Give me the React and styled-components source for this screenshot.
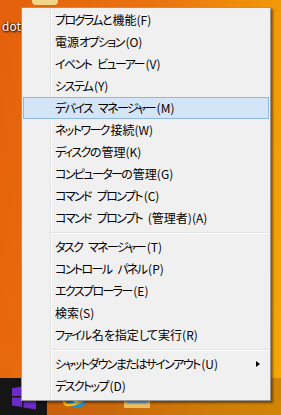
import React from "react";
import styled, { createGlobalStyle } from "styled-components";

const GlobalStyle = createGlobalStyle`
  html, body { margin: 0; padding: 0; width: 281px; height: 415px; overflow: hidden; }
  body { font-family: "Noto Sans CJK JP", "Noto Sans", sans-serif; }
`;

const Screen = styled.div`
  position: relative;
  width: 281px;
  height: 415px;
  display: flex;
  flex-direction: column;
  background: linear-gradient(100deg, #e4600c 0%, #ea7410 45%, #f29a08 80%, #f5a806 100%);
  overflow: hidden;
`;

const Desktop = styled.div`
  position: relative;
  flex: 1;
`;

const IconLabel = styled.div`
  position: absolute;
  left: 2px;
  top: 17px;
  font-family: "Noto Sans CJK JP", sans-serif;
  font-size: 12px;
  color: #fff;
  text-shadow: 0 0 2px #000, 1px 1px 2px #000;
`;

const IconStub = styled.div`
  position: absolute;
  left: 32px;
  top: 0;
  width: 26px;
  height: 5px;
  border-radius: 0 0 4px 4px;
  background: #f3d58a;
`;

const Taskbar = styled.div`
  height: 37px;
  display: flex;
  align-items: center;
  background: rgba(140, 70, 10, 0.35);
`;

const StartButton = styled.div`
  width: 47px;
  height: 100%;
  background: #151515;
  display: flex;
  align-items: center;
  justify-content: center;
`;

const TaskIcon = styled.div`
  width: 60px;
  height: 100%;
  display: flex;
  align-items: center;
  justify-content: center;
`;

const Menu = styled.div`
  position: absolute;
  left: 21px;
  top: 7px;
  width: 246px;
  padding: 1px 1px 3px;
  border: 1px solid #979797;
  background-color: #f0f0f0;
  background-image: linear-gradient(
    to right,
    transparent 28px,
    #e2e3e3 28px,
    #e2e3e3 29px,
    #ffffff 29px,
    #ffffff 30px,
    transparent 30px
  );
  box-shadow: 2px 2px 2px rgba(0, 0, 0, 0.45);
  font-family: "Meiryo UI", "Noto Sans CJK JP", sans-serif;
  font-size: 12px;
  font-feature-settings: "palt";
  color: #000;
  display: flex;
  flex-direction: column;
`;

const Item = styled.div`
  position: relative;
  height: 22px;
  box-sizing: border-box;
  display: flex;
  align-items: center;
  padding-left: 31px;
  line-height: 1;
  border: 1px solid ${(p) => (p.$hot ? "#90b8e4" : "transparent")};
  background: ${(p) => (p.$hot ? "#d4e5f7" : "transparent")};
`;

const Text = styled.span`
  white-space: pre;
  word-spacing: 1.5px;
`;

const Kana = styled.span`
  letter-spacing: -1.6px;
  margin-right: 1.6px;
`;

const Separator = styled.div`
  height: 7px;
  margin-left: 28px;
  display: flex;
  flex-direction: column;
  justify-content: center;
  &::before {
    content: "";
    height: 1px;
    background: #e2e3e3;
  }
  &::after {
    content: "";
    height: 1px;
    background: #fff;
  }
`;

const Arrow = styled.span`
  position: absolute;
  right: 8px;
  top: 7px;
  width: 0;
  height: 0;
  border-top: 3.5px solid transparent;
  border-bottom: 3.5px solid transparent;
  border-left: 4px solid #000;
`;

const groups = [
  [
    "プログラムと機能(F)",
    "電源オプション(O)",
    "イベント ビューアー(V)",
    "システム(Y)",
    "デバイス マネージャー(M)",
    "ネットワーク接続(W)",
    "ディスクの管理(K)",
    "コンピューターの管理(G)",
    "コマンド プロンプト(C)",
    "コマンド プロンプト (管理者)(A)",
  ],
  [
    "タスク マネージャー(T)",
    "コントロール パネル(P)",
    "エクスプローラー(E)",
    "検索(S)",
    "ファイル名を指定して実行(R)",
  ],
  ["シャットダウンまたはサインアウト(U)", "デスクトップ(D)"],
];

function Label({ text }) {
  const parts = text.split(/([\u3040-\u30ff]+)/).filter(Boolean);
  return (
    <Text>
      {parts.map((p, i) =>
        /^[\u3040-\u30ff]+$/.test(p) ? <Kana key={i}>{p}</Kana> : <React.Fragment key={i}>{p}</React.Fragment>
      )}
    </Text>
  );
}

const WinLogo = () => (
  <svg width="26" height="26" viewBox="0 0 26 26">
    <polygon points="1,4 11,2.6 11,12 1,12" fill="#6a2bc9" />
    <polygon points="12.5,2.4 25,0.6 25,12 12.5,12" fill="#6a2bc9" />
    <polygon points="1,13.5 11,13.5 11,23 1,21.6" fill="#6a2bc9" />
    <polygon points="12.5,13.5 25,13.5 25,25.4 12.5,23.6" fill="#6a2bc9" />
  </svg>
);

const IEIcon = () => (
  <svg width="30" height="30" viewBox="0 0 30 30">
    <circle cx="15" cy="16" r="10" fill="#1b8fe0" />
    <circle cx="15" cy="16" r="5" fill="#fff" />
    <ellipse cx="15" cy="15" rx="14" ry="6" fill="none" stroke="#f2c20c" strokeWidth="2.5" transform="rotate(-25 15 15)" />
  </svg>
);

const FolderIcon = () => (
  <svg width="30" height="26" viewBox="0 0 30 26">
    <rect x="2" y="6" width="26" height="18" fill="#e8c063" />
    <rect x="2" y="3" width="10" height="5" fill="#d9a93a" />
    <rect x="5" y="10" width="20" height="10" fill="#7fb6e6" />
  </svg>
);

export default function App() {
  let idx = 0;
  return (
    <Screen>
      <GlobalStyle />
      <Desktop>
        <IconStub />
        <IconLabel>dot</IconLabel>
      </Desktop>
      <Taskbar>
        <StartButton>
          <WinLogo />
        </StartButton>
        <TaskIcon>
          <IEIcon />
        </TaskIcon>
        <TaskIcon>
          <FolderIcon />
        </TaskIcon>
      </Taskbar>
      <Menu>
        {groups.map((g, gi) => (
          <React.Fragment key={gi}>
            {gi > 0 && <Separator />}
            {g.map((label) => {
              const i = idx++;
              return (
                <Item key={label} $hot={i === 4}>
                  <Label text={label} />
                  {i === 15 && <Arrow />}
                </Item>
              );
            })}
          </React.Fragment>
        ))}
      </Menu>
    </Screen>
  );
}
